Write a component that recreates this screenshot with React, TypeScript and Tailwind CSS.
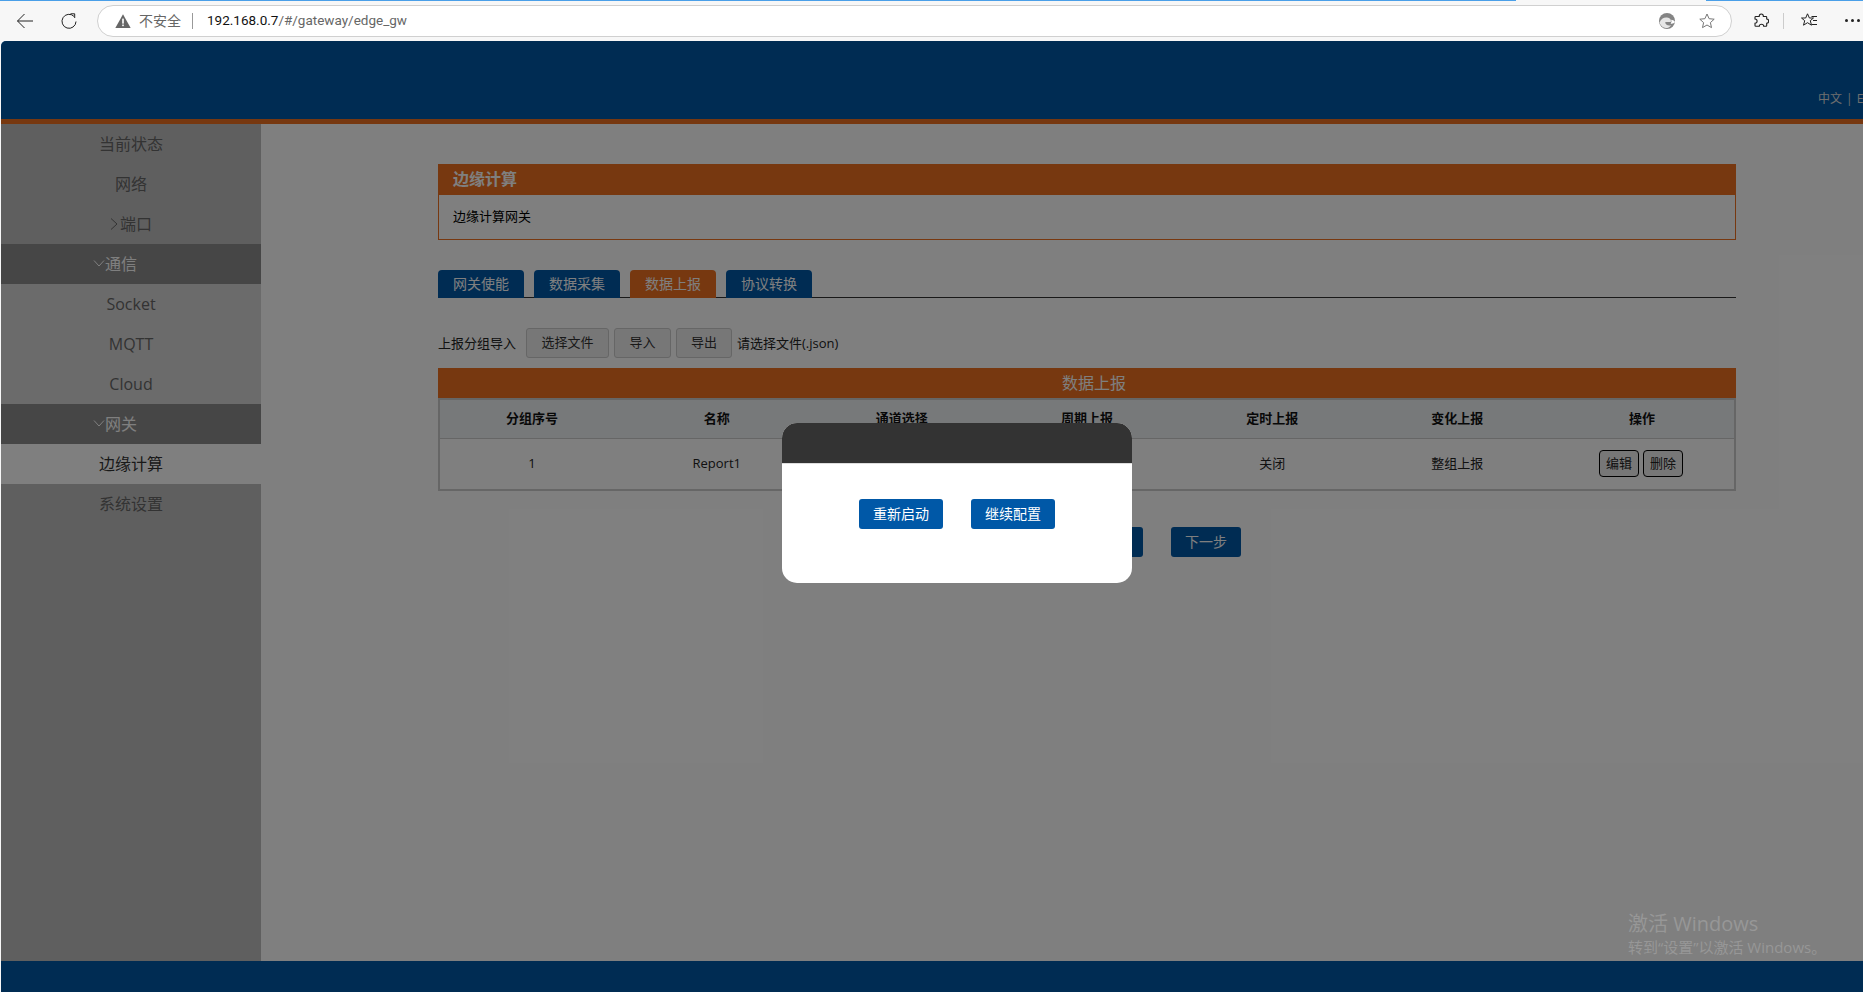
const font = "font-['Open_Sans','Noto_Sans_CJK_SC',sans-serif]";

type NavItem = { label: string; kind: "top" | "group" | "sub" | "active"; arrow?: "right" | "down" };

const navItems: NavItem[] = [
  { label: "当前状态", kind: "top" },
  { label: "网络", kind: "top" },
  { label: "端口", kind: "top", arrow: "right" },
  { label: "通信", kind: "group", arrow: "down" },
  { label: "Socket", kind: "sub" },
  { label: "MQTT", kind: "sub" },
  { label: "Cloud", kind: "sub" },
  { label: "网关", kind: "group", arrow: "down" },
  { label: "边缘计算", kind: "active" },
  { label: "系统设置", kind: "top" },
];

const columns = ["分组序号", "名称", "通道选择", "周期上报", "定时上报", "变化上报", "操作"];
const cells = ["1", "Report1", "全部", "开启", "关闭", "整组上报"];

function BrowserBar() {
  return (
    <div className="relative flex h-[41px] shrink-0 items-center bg-[#f7f7f7]">
      <div className="absolute left-0 top-0 h-px w-[1516px] bg-[#4a9fe8]" />
      <div className="absolute left-[1706px] right-0 top-0 h-px bg-[#4a9fe8]" />
      <svg viewBox="0 0 16 16" className="ml-[17px] h-4 w-4" fill="none" stroke="#222" strokeWidth="1">
        <path d="M0.500 8H16M7.500 1 .5 8l7 7" />
      </svg>
      <svg viewBox="0 0 16 16" className="ml-[28px] h-4 w-4" fill="none" stroke="#222" strokeWidth="1">
        <path d="M13 3.400A7 7 0 1 0 15 8.500" />
        <path d="M9.500 .8h4.200V5" />
      </svg>
      <div className="ml-[20px] flex h-[32px] w-[1635px] items-center rounded-full border border-[#d0d0d0] bg-white pl-[17px]">
        <svg viewBox="0 0 14 13" className="h-[16px] w-[16px]">
          <path d="M7 .5 13.700 12.600H.3Z" fill="#666" />
          <rect x="6.300" y="4.400" width="1.400" height="4.400" fill="#fff" />
          <rect x="6.300" y="9.600" width="1.400" height="1.400" fill="#fff" />
        </svg>
        <span className="ml-[8px] w-[42px] text-[14px] leading-none text-[#666]">不安全</span>
        <span className="ml-[11px] h-[16px] w-px bg-[#999]" />
        <span className="ml-[14px] font-['Roboto',sans-serif] text-[13.5px] text-[#111]">192.168.0.7</span>
        <span className="font-['Roboto',sans-serif] text-[13.5px] text-[#666]">/#/gateway/edge_gw</span>
        <svg viewBox="0 0 16 16" className="ml-auto h-[16px] w-[16px]">
          <circle cx="8" cy="8" r="8" fill="#848484" />
          <path d="M.6 9.800C1.600 6 5 4.200 8 4.600c3 .4 4.500 2.400 3.800 4.300H6.300C6 11.500 9 13.300 12.300 12.200 10 15 7 15.600 4.800 14.600 2.800 13.600 1.200 11.800.6 9.800Z" fill="#fff" opacity=".8" />
          <path d="M16 9c-1 1.500-3 2-4.400 1.500 1-1 1.200-2.500.4-3.700 1.500 0 3.200.8 4 2.200Z" fill="#fff" />
        </svg>
        <svg viewBox="0 0 16 16" className="ml-[24px] mr-[16px] h-4 w-4" fill="none" stroke="#777" strokeWidth="1">
          <path d="M8 1l2.100 4.700 5.100.5-3.800 3.400 1.100 5L8 12l-4.500 2.600 1.100-5L.8 6.200l5.100-.5Z" />
        </svg>
      </div>
      <svg viewBox="0 0 16 16" className="ml-[21px] h-4 w-4" fill="none" stroke="#222" strokeWidth="1.100">
        <path d="M4.500 3.500h1.700c0-3.300 4.200-3.300 4.200 0h2.600c.5 0 .7.200.7.700v1.800c2.600 0 2.600 4.200 0 4.200v2.300c0 .5-.2.700-.7.700h-2.300c0-2.600-4.400-2.600-4.400 0H2.800c-.5 0-.8-.3-.8-.8v-2.200c2.800 0 2.800-4.200 0-4.200V4.300c0-.5.3-.8.800-.8Z" />
      </svg>
      <span className="ml-[14px] h-[16px] w-px bg-[#ccc]" />
      <svg viewBox="0 0 16 16" className="ml-[17px] h-4 w-4" fill="none" stroke="#222" strokeWidth="1">
        <path d="M6.500.8 8.400 5H12.500L9.300 7.700l1.200 4.500L6.500 9.700l-4 2.500 1.200-4.500L.5 5h4.200Z" />
        <path d="M10.500 3.500H16M12 7.500h4M11 11.500h5" />
      </svg>
      <div className="ml-[28px] flex gap-[3px]">
        <span className="h-[3px] w-[3px] rounded-full bg-[#222]" />
        <span className="h-[3px] w-[3px] rounded-full bg-[#222]" />
        <span className="h-[3px] w-[3px] rounded-full bg-[#222]" />
      </div>
    </div>
  );
}

function Sidebar() {
  return (
    <div className="w-[260px] shrink-0 bg-[#bfbfbf]">
      {navItems.map((item) => (
        <div
          key={item.label}
          className={
            item.kind === "group"
              ? "flex h-10 items-center justify-center bg-[#8c8c8c] text-[16px] text-white"
              : item.kind === "sub"
                ? "flex h-10 items-center justify-center bg-[#d6d6d6] text-[16px] text-[#666]"
                : item.kind === "active"
                  ? "flex h-10 items-center justify-center bg-white text-[16px] text-[#333]"
                  : "flex h-10 items-center justify-center text-[16px] text-[#666]"
          }
        >
          {item.arrow === "right" && (
            <svg viewBox="0 0 8 12" className="mr-[2px] h-[12px] w-[8px]" fill="none" stroke="currentColor" strokeWidth="1">
              <path d="M1 .5 7 6 1 11.500" />
            </svg>
          )}
          {item.arrow === "down" && (
            <svg viewBox="0 0 12 7" className="-ml-[32px] mb-[2px] h-[7px] w-[12px]" fill="none" stroke="currentColor" strokeWidth="1">
              <path d="M1 .5 6 6l5-5.500" />
            </svg>
          )}
          <span>{item.label}</span>
        </div>
      ))}
    </div>
  );
}

function ToolButton({ label, width }: { label: string; width: string }) {
  return (
    <button className={`${width} flex h-[30px] items-center justify-center rounded-[3px] border border-[#ccc] bg-[#efefef] text-[13px] text-[#333]`}>
      {label}
    </button>
  );
}

function Content() {
  return (
    <div className="min-w-0 flex-1 bg-white pl-[177px] pr-[127px] pt-10 text-[13px] text-[#222]">
      <div className="h-[76px] border border-[#ee7020]">
        <div className="-mx-px -mt-px flex h-[31px] items-center bg-[#ee7020] pb-[2px] pl-[15px] text-[16px] font-bold leading-none text-white">
          边缘计算
        </div>
        <div className="pl-[14px] pt-[10px] leading-[22px] text-black">边缘计算网关</div>
      </div>

      <div className="mt-[30px] flex h-[28px] gap-[10px] border-b border-[#333]">
        {["网关使能", "数据采集", "数据上报", "协议转换"].map((tab) => (
          <div
            key={tab}
            className={
              tab === "数据上报"
                ? "flex h-[28px] w-[86px] items-center justify-center rounded-t-[4px] bg-[#ee7020] pb-[2px] text-[14px] text-white"
                : "flex h-[28px] w-[86px] items-center justify-center rounded-t-[4px] bg-[#0058a7] pb-[2px] text-[14px] text-white"
            }
          >
            {tab}
          </div>
        ))}
      </div>

      <div className="mt-[30px] flex h-[30px] items-center">
        <span className="w-[88px] pt-[1px]">上报分组导入</span>
        <ToolButton label="选择文件" width="w-[83px]" />
        <div className="w-[5px]" />
        <ToolButton label="导入" width="w-[57px]" />
        <div className="w-[5px]" />
        <ToolButton label="导出" width="w-[56px]" />
        <span className="ml-[5px] pt-[1px]">请选择文件(.json)</span>
      </div>

      <div className="mt-[10px] flex h-[30px] items-center justify-center bg-[#ee7020] pl-[14px] text-[16px] text-white">
        数据上报
      </div>
      <table className="w-full table-fixed border-collapse border-2 border-[#ccc] text-center">
        <thead>
          <tr className="h-[39px] border-b border-[#ccc] bg-[#eff2f5]">
            {columns.map((col) => (
              <th key={col} className="pb-[1px] font-bold text-[#111]">
                {col}
              </th>
            ))}
          </tr>
        </thead>
        <tbody>
          <tr className="h-[52px]">
            {cells.map((cell, i) => (
              <td key={i}>{cell}</td>
            ))}
            <td>
              <div className="flex justify-center gap-[4px] pr-[2px]">
                <button className="h-[27px] w-[40px] rounded-[4px] border border-black bg-[#efefef] text-[13px]">编辑</button>
                <button className="h-[27px] w-[40px] rounded-[4px] border border-black bg-[#efefef] text-[13px]">删除</button>
              </div>
            </td>
          </tr>
        </tbody>
      </table>

      <div className="ml-[635px] mt-[36px] flex gap-[28px]">
        <button className="h-[30px] w-[70px] rounded-[3px] bg-[#0058a7] pb-[2px] text-[14px] text-white">上一步</button>
        <button className="h-[30px] w-[70px] rounded-[3px] bg-[#0058a7] pb-[2px] text-[14px] text-white">下一步</button>
      </div>
    </div>
  );
}

function RestartDialog() {
  return (
    <div className="absolute left-[781px] top-[382px] h-[160px] w-[350px] overflow-hidden rounded-[15px] bg-white">
      <div className="h-[41px] border-b border-[#ddd] bg-[#333]" />
      <div className="flex justify-center gap-[28px] pt-[35px]">
        <button className="h-[30px] w-[84px] rounded-[3px] bg-[#0058a7] pb-[1px] text-[14px] text-white">重新启动</button>
        <button className="h-[30px] w-[84px] rounded-[3px] bg-[#0058a7] pb-[1px] text-[14px] text-white">继续配置</button>
      </div>
    </div>
  );
}

export default function App() {
  return (
    <div className={`flex h-[992px] w-full flex-col overflow-hidden bg-[#f7f7f7] ${font}`}>
      <BrowserBar />
      <div className="relative ml-px flex min-h-0 flex-1 flex-col overflow-hidden rounded-tl-[5px]">
        <div className="h-[78px] shrink-0 whitespace-nowrap bg-[#0058a7] pl-[1817px] pt-[49px] text-[12px] text-[#ddd] [word-spacing:1px]">
          中文 | English
        </div>
        <div className="h-[5px] shrink-0 bg-[#ee7020]" />
        <div className="flex min-h-0 flex-1">
          <Sidebar />
          <Content />
        </div>
        <div className="h-[31px] shrink-0 bg-[#0058a7]" />

        <div className="absolute inset-0 bg-black/50" />
        <RestartDialog />
        <div className="absolute left-[1627px] top-[870px] text-[#979797]">
          <div className="text-[20px] leading-[26px]">激活 Windows</div>
          <div className="text-[15px] leading-[21px]">转到“设置”以激活 Windows。</div>
        </div>
      </div>
    </div>
  );
}
